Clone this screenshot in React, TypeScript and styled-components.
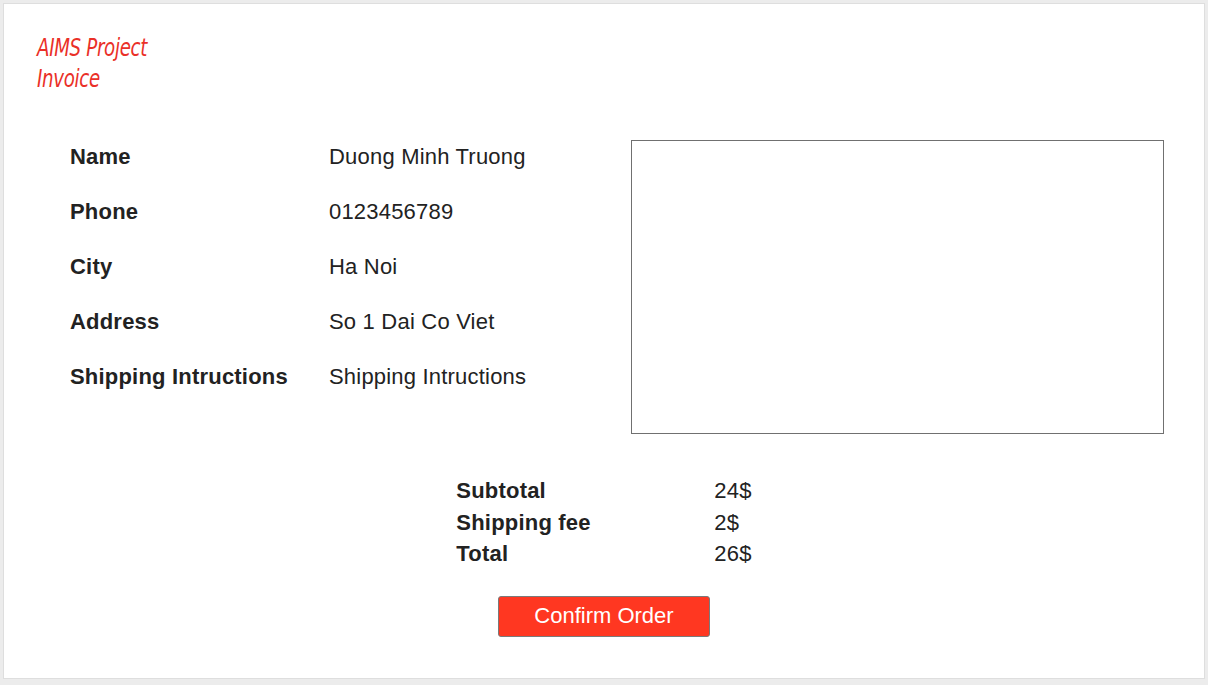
import React from "react";
import styled, { createGlobalStyle } from "styled-components";

const Global = createGlobalStyle`
  html, body { margin: 0; padding: 0; background: #ececec; }
  body { font-family: "Liberation Sans", Arial, sans-serif; color: #222; }
`;

const Panel = styled.div`
  box-sizing: border-box;
  margin: 3px 0 0 3px;
  width: 1202px;
  height: 676px;
  background: #fff;
  border: 1px solid #dedede;
  padding: 28px 0 0 33px;
  display: flex;
  flex-direction: column;
`;

const Title = styled.div`
  font-family: "Liberation Sans Narrow", "DejaVu Sans Condensed", "Liberation Sans", sans-serif;
  font-stretch: condensed;
  font-style: italic;
  font-size: 25px;
  line-height: 31px;
  color: #ea3028;
  letter-spacing: -0.4px;
  transform: scaleX(0.81);
  transform-origin: left top;
`;

const Info = styled.div`
  display: flex;
  margin: 46px 0 0 33px;
`;

const Fields = styled.div`
  box-sizing: border-box;
  width: 561px;
  padding-top: 4px;
  display: grid;
  grid-template-columns: 259px auto;
  grid-auto-rows: 25px;
  row-gap: 30px;
  align-content: start;
  font-size: 22px;
  line-height: 25px;
  letter-spacing: 0.2px;
`;

const Label = styled.div`
  font-weight: bold;
  white-space: nowrap;
`;

const Value = styled.div`
  white-space: nowrap;
`;

const Preview = styled.div`
  box-sizing: border-box;
  width: 533px;
  height: 294px;
  border: 1px solid #707070;
  background: #fff;
`;

const Summary = styled.div`
  align-self: center;
  margin: 41px 0 0 -33px;
  display: grid;
  grid-template-columns: 258px auto;
  font-size: 22px;
  line-height: 31.5px;
  letter-spacing: 0.2px;
`;

const ConfirmButton = styled.button`
  align-self: center;
  margin: 26px 0 0 -33px;
  box-sizing: border-box;
  width: 212px;
  height: 41px;
  background: #ff3721;
  border: 1px solid #7a7a7a;
  border-radius: 3px;
  color: #fff;
  font-family: "Liberation Sans", Arial, sans-serif;
  font-size: 22px;
  padding: 0;
  cursor: pointer;
`;

const fields: [string, string][] = [
  ["Name", "Duong Minh Truong"],
  ["Phone", "0123456789"],
  ["City", "Ha Noi"],
  ["Address", "So 1 Dai Co Viet"],
  ["Shipping Intructions", "Shipping Intructions"],
];

const totals: [string, string][] = [
  ["Subtotal", "24$"],
  ["Shipping fee", "2$"],
  ["Total", "26$"],
];

export default function App() {
  return (
    <>
      <Global />
      <Panel>
        <Title>
          AIMS Project
          <br />
          Invoice
        </Title>
        <Info>
          <Fields>
            {fields.map(([k, v]) => (
              <React.Fragment key={k}>
                <Label>{k}</Label>
                <Value>{v}</Value>
              </React.Fragment>
            ))}
          </Fields>
          <Preview />
        </Info>
        <Summary>
          {totals.map(([k, v]) => (
            <React.Fragment key={k}>
              <Label>{k}</Label>
              <Value>{v}</Value>
            </React.Fragment>
          ))}
        </Summary>
        <ConfirmButton>Confirm Order</ConfirmButton>
      </Panel>
    </>
  );
}
